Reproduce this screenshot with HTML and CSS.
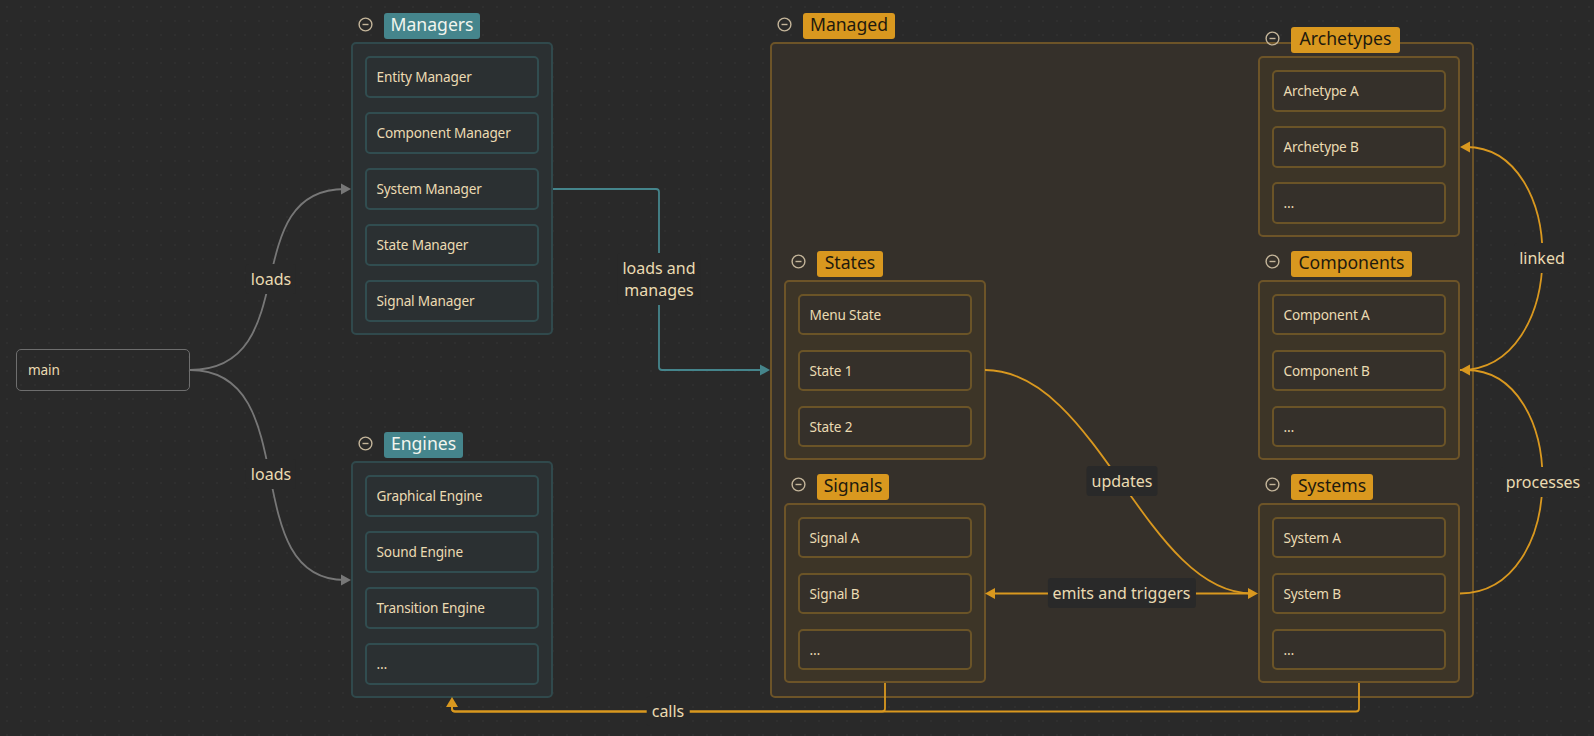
FILE: index.html
```html
<!DOCTYPE html>
<html lang="en">
<head>
    <meta charset="UTF-8">
    <title>Architecture</title>
    <link rel="stylesheet" href="styles.css">
</head>
<body>
    <div class="canvas">
        <div class="node main-node">main</div>

        <div class="group teal g-managers">
            <div class="head">
                <svg class="toggle" viewBox="0 0 15 15"><circle cx="7.5" cy="7.5" r="6.4"/><path d="M4.5 7.5h6"/></svg>
                <span class="pill">Managers</span>
            </div>
            <div class="box">
                <div class="item">Entity Manager</div>
                <div class="item">Component Manager</div>
                <div class="item">System Manager</div>
                <div class="item">State Manager</div>
                <div class="item">Signal Manager</div>
            </div>
        </div>

        <div class="group teal g-engines">
            <div class="head">
                <svg class="toggle" viewBox="0 0 15 15"><circle cx="7.5" cy="7.5" r="6.4"/><path d="M4.5 7.5h6"/></svg>
                <span class="pill">Engines</span>
            </div>
            <div class="box">
                <div class="item">Graphical Engine</div>
                <div class="item">Sound Engine</div>
                <div class="item">Transition Engine</div>
                <div class="item">…</div>
            </div>
        </div>

        <div class="group amber g-managed">
            <div class="head">
                <svg class="toggle" viewBox="0 0 15 15"><circle cx="7.5" cy="7.5" r="6.4"/><path d="M4.5 7.5h6"/></svg>
                <span class="pill">Managed</span>
            </div>
            <div class="box managed-box"></div>
        </div>

        <div class="group amber inner g-archetypes">
            <div class="head">
                <svg class="toggle" viewBox="0 0 15 15"><circle cx="7.5" cy="7.5" r="6.4"/><path d="M4.5 7.5h6"/></svg>
                <span class="pill">Archetypes</span>
            </div>
            <div class="box">
                <div class="item">Archetype A</div>
                <div class="item">Archetype B</div>
                <div class="item">…</div>
            </div>
        </div>

        <div class="group amber inner g-components">
            <div class="head">
                <svg class="toggle" viewBox="0 0 15 15"><circle cx="7.5" cy="7.5" r="6.4"/><path d="M4.5 7.5h6"/></svg>
                <span class="pill">Components</span>
            </div>
            <div class="box">
                <div class="item">Component A</div>
                <div class="item">Component B</div>
                <div class="item">…</div>
            </div>
        </div>

        <div class="group amber inner g-systems">
            <div class="head">
                <svg class="toggle" viewBox="0 0 15 15"><circle cx="7.5" cy="7.5" r="6.4"/><path d="M4.5 7.5h6"/></svg>
                <span class="pill">Systems</span>
            </div>
            <div class="box">
                <div class="item">System A</div>
                <div class="item">System B</div>
                <div class="item">…</div>
            </div>
        </div>

        <div class="group amber inner g-states">
            <div class="head">
                <svg class="toggle" viewBox="0 0 15 15"><circle cx="7.5" cy="7.5" r="6.4"/><path d="M4.5 7.5h6"/></svg>
                <span class="pill">States</span>
            </div>
            <div class="box">
                <div class="item">Menu State</div>
                <div class="item">State 1</div>
                <div class="item">State 2</div>
            </div>
        </div>

        <div class="group amber inner g-signals">
            <div class="head">
                <svg class="toggle" viewBox="0 0 15 15"><circle cx="7.5" cy="7.5" r="6.4"/><path d="M4.5 7.5h6"/></svg>
                <span class="pill">Signals</span>
            </div>
            <div class="box">
                <div class="item">Signal A</div>
                <div class="item">Signal B</div>
                <div class="item">…</div>
            </div>
        </div>

        <!-- edges -->
        <svg class="edges" viewBox="0 0 1594 736">
            <g class="edge-grey">
                <path d="M190 370 C306 370 235 189 345 189"/>
                <path d="M190 370 C306 370 235 580 345 580"/>
                <polygon points="351,189 341,183.5 341,194.5"/>
                <polygon points="351,580 341,574.5 341,585.5"/>
            </g>
            <g class="edge-teal">
                <path d="M553 189H656a3 3 0 0 1 3 3V367a3 3 0 0 0 3 3H764"/>
                <polygon points="770,370 760,364.5 760,375.5"/>
            </g>
            <g class="edge-amber">
                <path d="M985 370 C1097 370 1146 593.5 1252 593.5"/>
                <path d="M991 593.5H1252"/>
                <polygon points="985,593.5 995,588 995,599"/>
                <polygon points="1258,593.5 1248,588 1248,599"/>
                <path d="M1460 370 C1569 370 1569 147 1466 147"/>
                <polygon points="1460,147 1470,141.5 1470,152.5"/>
                <path d="M1460 593.5 C1569 593.5 1569 370 1466 370"/>
                <polygon points="1460,370 1470,364.5 1470,375.5"/>
                <path d="M885 683V708.5a3 3 0 0 1 -3 3H455a3 3 0 0 1 -3 -3V705"/>
                <path d="M1359 683V708.5a3 3 0 0 1 -3 3H455a3 3 0 0 1 -3 -3V705"/>
                <polygon points="452,697 446,707 458,707"/>
            </g>
        </svg>

        <span class="edge-label l-loads-top">loads</span>
        <span class="edge-label l-loads-bottom">loads</span>
        <span class="edge-label l-manages">loads and<br>manages</span>
        <span class="edge-label l-updates">updates</span>
        <span class="edge-label l-emits">emits and triggers</span>
        <span class="edge-label l-linked">linked</span>
        <span class="edge-label l-processes">processes</span>
        <span class="edge-label l-calls">calls</span>
    </div>
</body>
</html>
```

FILE: styles.css
```css
* {
    box-sizing: border-box;
}
body {
    margin: 0;
    background-color: #292929;
    font-family: "Noto Sans", sans-serif;
    color: #ebdbb2;
    overflow: hidden;
}
.canvas {
    position: relative;
    width: 1594px;
    height: 736px;
    overflow: hidden;
    background-image: radial-gradient(circle, #2f2f2f 1px, transparent 1px);
    background-size: 14px 14px;
}

/* nodes */
.node, .item {
    display: flex;
    align-items: center;
    height: 41.75px;
    padding: 0 0 0 9.5px;
    font-size: 13.6px;
    letter-spacing: -0.15px;
    border-radius: 5px;
}
.main-node {
    position: absolute;
    left: 16px;
    top: 349px;
    width: 174px;
    padding-left: 11px;
    border: 1px solid #6e6e6e;
}
.group {
    position: absolute;
    width: 202px;
}
.head {
    display: flex;
    align-items: center;
    height: 26px;
    margin-bottom: 3px;
    padding-left: 6.5px;
}
.toggle {
    width: 15px;
    height: 15px;
    margin: 0 11.5px 4px 0;
    fill: none;
    stroke: #c4b59a;
    stroke-width: 1.4;
}
.pill {
    height: 26px;
    line-height: 23px;
    font-size: 17.6px;
    text-align: center;
    border-radius: 3px;
}
.g-managers .pill { width: 96px; }
.g-engines .pill { width: 79px; }
.g-managed .pill { width: 92px; }
.g-archetypes .pill { width: 109px; }
.g-components .pill { width: 121px; }
.g-systems .pill { width: 82px; }
.g-states .pill { width: 66px; }
.g-signals .pill { width: 72px; }

.box {
    display: flex;
    flex-direction: column;
    gap: 14.25px;
    padding: 12px 12px 11px;
    border-width: 2px;
    border-style: solid;
    border-radius: 5px;
}
.item {
    flex: none;
    border-width: 2px;
    border-style: solid;
}

/* colours */
.teal .pill {
    background-color: #45858c;
    color: #f2f5ee;
}
.teal .box {
    background-color: #2b3032;
    border-color: #30494c;
}
.teal .item {
    background-color: #2b3032;
    border-color: #314d50;
}
.amber .pill {
    background-color: #d9981f;
    color: #1e1a0e;
}
.amber .box {
    background-color: #3d3527;
    border-color: #6d5428;
}
.amber .item {
    background-color: #35302a;
    border-color: #6b5427;
}
.amber .managed-box {
    background-color: #35302a;
    height: 655.5px;
}

/* group places on the canvas */
.g-managers { left: 351px; top: 13px; }
.g-engines { left: 351px; top: 432px; }
.g-managed { left: 770px; top: 13px; width: 703.5px; }
.g-archetypes { left: 1258px; top: 27px; }
.g-components { left: 1258px; top: 250.5px; }
.g-systems { left: 1258px; top: 473.5px; }
.g-states { left: 784px; top: 250.5px; }
.g-signals { left: 784px; top: 473.5px; }

/* edges */
.edges {
    position: absolute;
    left: 0;
    top: 0;
    width: 1594px;
    height: 736px;
    pointer-events: none;
}
.edges path {
    fill: none;
    stroke-width: 1.8;
}
.edge-grey path { stroke: #777777; }
.edge-grey polygon { fill: #777777; }
.edge-teal path { stroke: #45858c; }
.edge-teal polygon { fill: #45858c; }
.edge-amber path { stroke: #d9981f; }
.edge-amber polygon { fill: #d9981f; }

.edge-label {
    position: absolute;
    transform: translate(-50%, -50%);
    padding: 4px 5px;
    font-size: 16px;
    line-height: 22px;
    text-align: center;
    background-color: #292929;
    border-radius: 3px;
}
.l-loads-top { left: 271px; top: 279px; }
.l-loads-bottom { left: 271px; top: 474px; }
.l-manages { left: 659px; top: 279px; }
.l-updates { left: 1122px; top: 481px; }
.l-emits { left: 1121.5px; top: 593px; }
.l-linked { left: 1542px; top: 258px; }
.l-processes { left: 1543px; top: 482px; }
.l-calls { left: 668px; top: 711px; }
```
